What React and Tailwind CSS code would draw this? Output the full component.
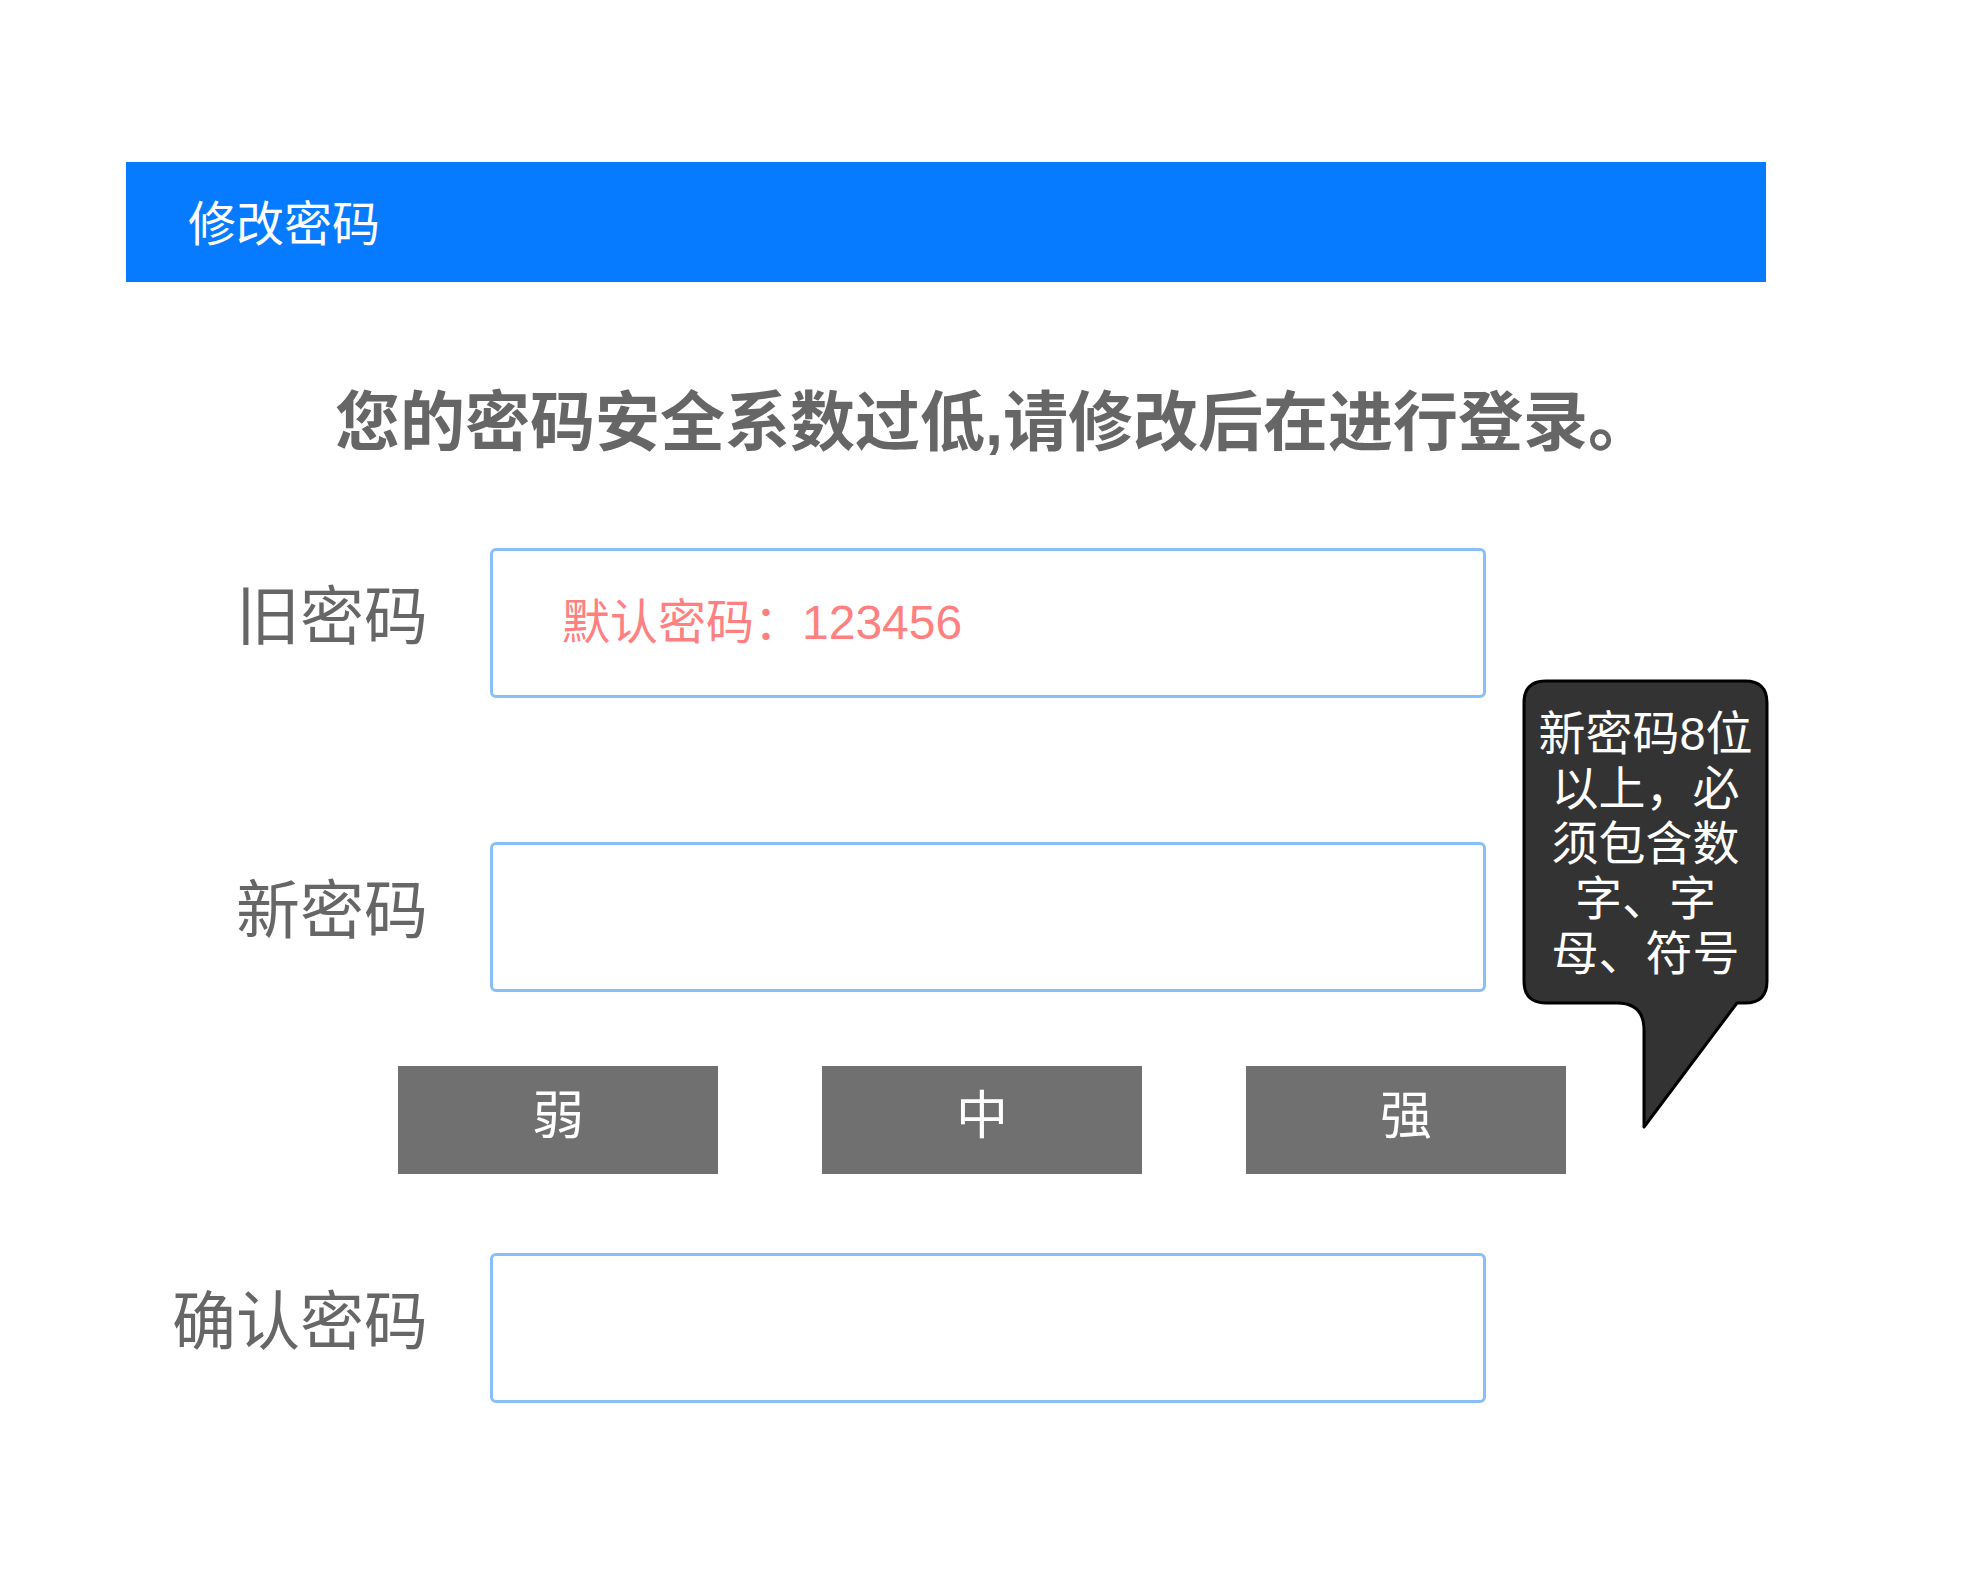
export default function App() {
  return (
    <div className="relative w-[1988px] h-[1584px] bg-white pt-[162px] font-['Liberation_Sans','Noto_Sans_CJK_SC',sans-serif]">
      <div className="ml-[126px] w-[1640px] h-[120px] bg-[#077bff] flex items-center pl-[62px] pt-[6px] text-white text-[48px] leading-none">
        修改密码
      </div>

      <div className="mt-[105px] h-[72px] text-center text-[65px] leading-[72px] font-bold text-[#666666]">
        您的密码安全系数过低,请修改后在进行登录。
      </div>

      <div className="mt-[89px] flex items-center">
        <div className="w-[428px] text-right text-[64px] leading-none text-[#666666] mb-[12px]">旧密码</div>
        <div className="ml-[62px] w-[996px] h-[150px] border-[3px] border-[#89bff8] rounded-[6px] flex items-center pl-[69px] text-[48px] leading-none text-[#ff8080]">
          默认密码：123456
        </div>
      </div>

      <div className="mt-[144px] flex items-center">
        <div className="w-[428px] text-right text-[64px] leading-none text-[#666666] mb-[12px]">新密码</div>
        <div className="ml-[62px] w-[996px] h-[150px] border-[3px] border-[#89bff8] rounded-[6px]"></div>
      </div>

      <div className="mt-[74px] ml-[398px] flex gap-[104px]">
        {["弱", "中", "强"].map((t) => (
          <div key={t} className="w-[320px] h-[108px] bg-[#707070] flex items-center justify-center text-white text-[52px] leading-none pb-[8px]">
            {t}
          </div>
        ))}
      </div>

      <div className="mt-[79px] flex items-center">
        <div className="w-[428px] text-right text-[64px] leading-none text-[#666666] mb-[12px]">确认密码</div>
        <div className="ml-[62px] w-[996px] h-[150px] border-[3px] border-[#89bff8] rounded-[6px]"></div>
      </div>

      <div className="absolute left-[1520px] top-[678px] w-[252px] h-[454px]">
        <svg width="252" height="454" viewBox="0 0 252 454" className="absolute left-0 top-0">
          <path
            d="M 26 3 H 225 Q 247 3 247 25 V 303 Q 247 325 225 325 H 217 L 124 449 V 352 Q 124 325 97 325 H 26 Q 4 325 4 303 V 25 Q 4 3 26 3 Z"
            fill="#333333"
            stroke="#000000"
            strokeWidth="3"
            strokeLinejoin="round"
          />
        </svg>
        <div className="absolute left-[4px] top-[28px] w-[243px] text-center text-white text-[47px] leading-[55px]">
          <div>新密码8位</div>
          <div>以上，必</div>
          <div>须包含数</div>
          <div>字、字</div>
          <div>母、符号</div>
        </div>
      </div>
    </div>
  );
}
